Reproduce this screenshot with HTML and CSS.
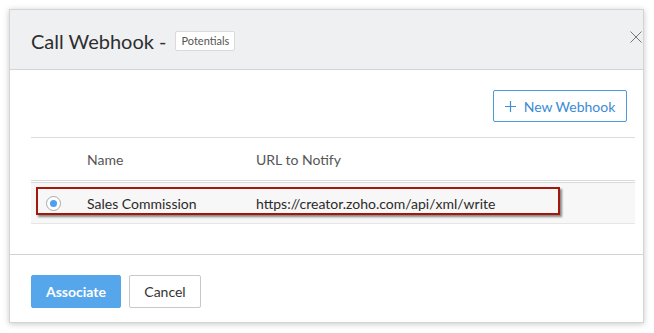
FILE: index.html
```html
<!DOCTYPE html>
<html lang="en">
<head>
  <meta charset="UTF-8" />
  <title>Call Webhook</title>
  <link rel="stylesheet" href="styles.css">
</head>
<body>

<div class="dialog">
  <div class="dialog-header">
    <h1>Call Webhook -</h1>
    <span class="module-tag">Potentials</span>
    <svg class="close" width="12" height="12" viewBox="0 0 12 12">
      <path d="M0.5 0.5 L11.5 11.5 M11.5 0.5 L0.5 11.5" stroke="#777" stroke-width="1" fill="none"/>
    </svg>
  </div>

  <div class="dialog-body">
    <div class="toolbar">
      <button class="btn-new">
        <svg width="11" height="11" viewBox="0 0 11 11">
          <path d="M5.5 0 V11 M0 5.5 H11" stroke="#3f8fd8" stroke-width="1.2" fill="none"/>
        </svg>
        New Webhook
      </button>
    </div>

    <div class="hook-table">
      <div class="hook-row head">
        <div class="col-radio"></div>
        <div class="col-name">Name</div>
        <div class="col-url">URL to Notify</div>
      </div>
      <div class="hook-row selected">
        <div class="col-radio"><span class="radio"></span></div>
        <div class="col-name">Sales Commission</div>
        <div class="col-url">https://creator.zoho.com/api/xml/write</div>
        <div class="highlight"></div>
      </div>
    </div>
  </div>

  <div class="dialog-footer">
    <button class="btn btn-primary">Associate</button>
    <button class="btn btn-plain">Cancel</button>
  </div>
</div>

</body>
</html>
```

FILE: styles.css
```css
body {
  margin: 0;
  padding: 9px 10px 10px 9px;
  background: #fff;
  font-family: 'Lato', 'Open Sans', sans-serif;
  color: #333;
}
.dialog {
  width: 635px;
  height: 314px;
  background: #fff;
  border: 1px solid #d4d4d4;
  box-sizing: border-box;
  box-shadow: 0 1px 6px rgba(0, 0, 0, 0.22);
  display: flex;
  flex-direction: column;
}
.dialog-header {
  height: 60px;
  box-sizing: border-box;
  background: #eff0f2;
  border-bottom: 1px solid #d3d3d3;
  display: flex;
  align-items: center;
  padding: 2px 0 0 21px;
  position: relative;
}
.dialog-header h1 {
  margin: 0;
  font-size: 20px;
  font-weight: 400;
  color: #2e2e2e;
}
.module-tag {
  margin-left: 9px;
  background: #fff;
  border: 1px solid #dadada;
  border-radius: 2px;
  font-size: 11px;
  color: #555;
  padding: 3px 5px;
  line-height: 12px;
}
.close {
  position: absolute;
  right: 1px;
  top: 21px;
}
.dialog-body {
  flex: 1;
  padding: 0 8px 0 21px;
}
.toolbar {
  display: flex;
  justify-content: flex-end;
  padding: 20px 8px 15px 0;
  border-bottom: 1px solid #dcdcdc;
}
.btn-new {
  height: 32px;
  width: 134px;
  background: #fff;
  border: 1px solid #4b9ad9;
  border-radius: 2px;
  color: #3b8bd5;
  font-family: inherit;
  font-size: 14px;
  display: flex;
  align-items: center;
  justify-content: center;
  gap: 8px;
  padding: 0;
}
.hook-row {
  display: flex;
  align-items: center;
  font-size: 14px;
  position: relative;
}
.hook-row.head {
  height: 42px;
  color: #555;
  border-bottom: 3px double #dadada;
}
.hook-row.selected {
  height: 40px;
  background: #f7f7f7;
  border-bottom: 1px solid #e6e6e6;
  color: #2b2b2b;
}
.col-radio {
  width: 56px;
  display: flex;
  padding-left: 15px;
  box-sizing: border-box;
}
.col-name {
  width: 169px;
}
.radio {
  width: 13px;
  height: 13px;
  border: 1px solid #a9a9a9;
  border-radius: 50%;
  background: #fff;
  display: flex;
  align-items: center;
  justify-content: center;
}
.radio::after {
  content: "";
  width: 7px;
  height: 7px;
  border-radius: 50%;
  background: #4c9ff3;
}
.highlight {
  position: absolute;
  left: 5px;
  top: 4px;
  width: 524px;
  height: 28px;
  box-sizing: border-box;
  border: 2px solid #a3170c;
  box-shadow: 2px 2px 2px rgba(0, 0, 0, 0.45);
}
.dialog-footer {
  height: 68px;
  box-sizing: border-box;
  border-top: 1px solid #d3d3d3;
  padding: 20px 21px 0;
  display: flex;
  align-items: flex-start;
  gap: 8px;
}
.btn {
  height: 33px;
  border-radius: 2px;
  font-family: inherit;
  font-size: 14px;
  padding: 0;
}
.btn-primary {
  width: 90px;
  background: #55a6ea;
  border: 1px solid #55a6ea;
  color: #fff;
  font-weight: 700;
}
.btn-plain {
  width: 72px;
  background: #fff;
  border: 1px solid #c8c8c8;
  color: #333;
}
```
